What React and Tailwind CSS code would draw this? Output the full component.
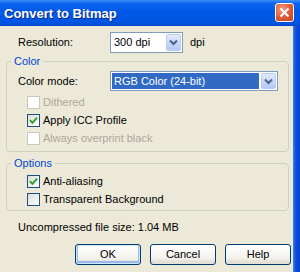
import React from 'react';

const font = { fontFamily: '"Liberation Sans", Arial, sans-serif' };

function Chevron() {
  return (
    <svg width="9" height="7" viewBox="0 0 9 7">
      <path d="M1 1.5 L4.5 5 L8 1.5" fill="none" stroke="#4d6185" strokeWidth="2" />
    </svg>
  );
}

function DropButton() {
  return (
    <div className="w-[15px] self-stretch m-px rounded-[2px] border border-[#b9ccf4] bg-[linear-gradient(to_bottom,#e2ebfd,#c4d5fa_60%,#b5c9f5)] flex items-center justify-center">
      <Chevron />
    </div>
  );
}

function Check({ checked, disabled, label }) {
  return (
    <div className="flex items-center h-[13px]">
      <div
        className={`w-[13px] h-[13px] border flex items-center justify-center ${
          disabled
            ? 'border-[#cac8bb] bg-white'
            : 'border-[#1c5180] bg-[linear-gradient(135deg,#dcdcd7,#ffffff)]'
        }`}
      >
        {checked && (
          <svg width="9" height="9" viewBox="0 0 9 9">
            <path d="M1 4.2 L3.4 6.8 L8 1.6" fill="none" stroke="#21a121" strokeWidth="1.8" />
          </svg>
        )}
      </div>
      <span className={`ml-[3px] text-[11px] leading-[13px] ${disabled ? 'text-[#aca899]' : 'text-black'}`}>
        {label}
      </span>
    </div>
  );
}

function XpButton({ children, isDefault }) {
  return (
    <button
      className={`w-[66px] h-[21px] rounded-[3px] border border-[#003c74] text-[11px] text-black bg-[linear-gradient(to_bottom,#ffffff,#f3f2ec_70%,#d8d4c8)] ${
        isDefault ? 'shadow-[inset_0_0_0_1px_#cee7ff,inset_0_-1px_0_2px_#98b8ea]' : 'shadow-[inset_0_-2px_0_#e3e0d6]'
      }`}
      style={font}
    >
      {children}
    </button>
  );
}

export default function App() {
  return (
    <div className="w-[300px] h-[272px] overflow-hidden flex flex-col bg-[#ece9d8] select-none" style={font}>
      {/* Title bar */}
      <div className="h-[26px] shrink-0 flex items-start justify-between pl-[4px] pr-[6px] bg-[linear-gradient(to_bottom,#3d8ef9_0%,#0b64ee_14%,#0058e6_45%,#0055e3_85%,#0049cf_100%)]">
        <span className="mt-[6px] text-[13px] leading-[16px] font-bold text-white [text-shadow:1px_1px_0_#0a2a8a]">
          Convert to Bitmap
        </span>
        <div className="mt-[3px] w-[19px] h-[19px] rounded-[3px] border border-white bg-[radial-gradient(circle_at_35%_30%,#f29a7c,#de5a36_55%,#c23d1d)] flex items-center justify-center">
          <svg width="11" height="11" viewBox="0 0 11 11">
            <path d="M1.5 1.5 L9.5 9.5 M9.5 1.5 L1.5 9.5" stroke="white" strokeWidth="2" />
          </svg>
        </div>
      </div>

      <div className="flex flex-1">
        <div className="w-[293px] flex flex-col text-[11px] leading-[13px] text-black">
          {/* Resolution */}
          <div className="mt-[6px] h-[21px] flex items-center pl-[18px]">
            <span className="w-[92px]">Resolution:</span>
            <div className="w-[73px] h-[21px] border border-[#7f9db9] bg-white flex items-center">
              <span className="flex-1 pl-[3px]">300 dpi</span>
              <DropButton />
            </div>
            <span className="ml-[7px]">dpi</span>
          </div>

          {/* Color group */}
          <fieldset className="mt-[2px] ml-[6px] mr-[4px] border border-[#d0d0bf] rounded-[4px] pb-[6px]">
            <legend className="ml-[4px] px-[3px] text-[#0046d5]">Color</legend>
            <div className="mt-[3px] h-[20px] flex items-center pl-[11px]">
              <span className="w-[92px]">Color mode:</span>
              <div className="w-[168px] h-[20px] border border-[#7f9db9] bg-white flex items-stretch">
                <span className="flex-1 m-px bg-[#316ac5] text-white pl-[2px] flex items-center">RGB Color (24-bit)</span>
                <DropButton />
              </div>
            </div>
            <div className="mt-[5px] pl-[20px] flex flex-col gap-[5px]">
              <Check disabled label="Dithered" />
              <Check checked label="Apply ICC Profile" />
              <Check disabled label="Always overprint black" />
            </div>
          </fieldset>

          {/* Options group */}
          <fieldset className="mt-[5px] ml-[6px] mr-[4px] border border-[#d0d0bf] rounded-[4px] pb-[4px]">
            <legend className="ml-[4px] px-[3px] text-[#0046d5]">Options</legend>
            <div className="mt-[5px] pl-[20px] flex flex-col gap-[5px]">
              <Check checked label="Anti-aliasing" />
              <Check label="Transparent Background" />
            </div>
          </fieldset>

          <div className="mt-[10px] pl-[18px]">Uncompressed file size: 1.04 MB</div>

          <div className="mt-[10px] flex justify-end gap-[9px] pr-[2px]">
            <XpButton isDefault>OK</XpButton>
            <XpButton>Cancel</XpButton>
            <XpButton>Help</XpButton>
          </div>
        </div>
        {/* Right window frame */}
        <div className="w-[7px] bg-[linear-gradient(to_right,#3d7ff0,#0b4fdc_40%,#0a3fc4)]" />
      </div>
    </div>
  );
}
